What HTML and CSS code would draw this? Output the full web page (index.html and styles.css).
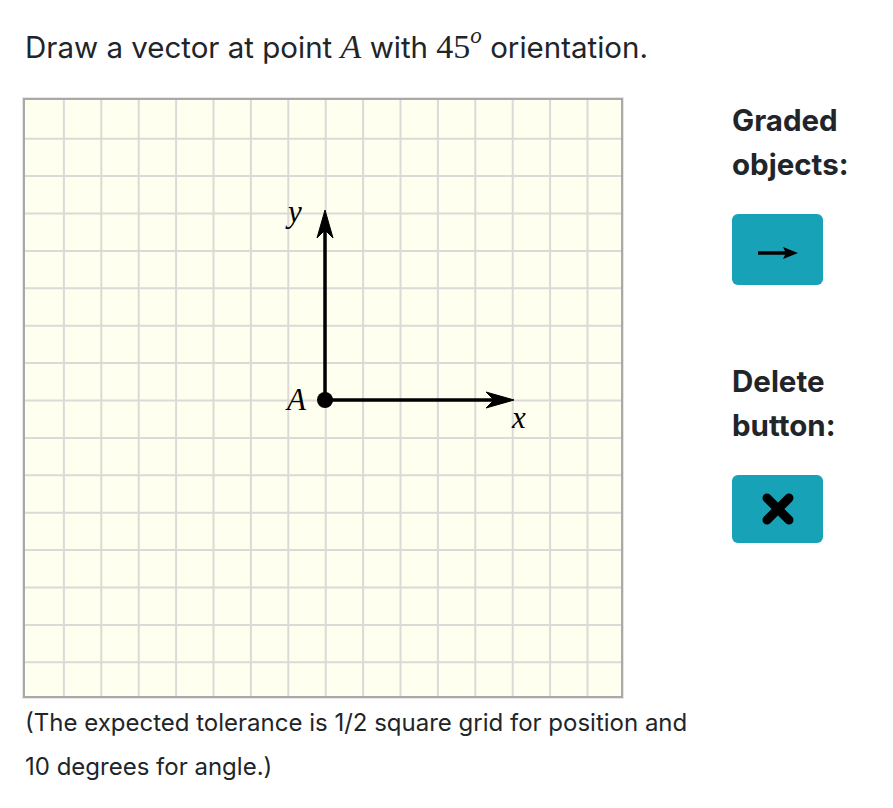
FILE: index.html
```html
<!DOCTYPE html>
<html lang="en">
<head>
<meta charset="utf-8">
<title>Vector question</title>
<link rel="stylesheet" href="styles.css">
</head>
<body>
<main class="page">
  <p class="prompt">Draw a vector at point <span class="math">A</span> with <span class="num">45<sup class="math">o</sup></span> orientation.</p>
  <div class="workspace">
    <div class="board">
      <svg class="board-svg" viewBox="0 0 596 596" width="596" height="596" xmlns="http://www.w3.org/2000/svg">
        <g class="grid" stroke="#dadad6" stroke-width="2">
          <line x1="38.9" y1="0" x2="38.9" y2="596"/>
          <line x1="76.3" y1="0" x2="76.3" y2="596"/>
          <line x1="113.7" y1="0" x2="113.7" y2="596"/>
          <line x1="151.1" y1="0" x2="151.1" y2="596"/>
          <line x1="188.5" y1="0" x2="188.5" y2="596"/>
          <line x1="225.9" y1="0" x2="225.9" y2="596"/>
          <line x1="263.3" y1="0" x2="263.3" y2="596"/>
          <line x1="300.7" y1="0" x2="300.7" y2="596"/>
          <line x1="338.1" y1="0" x2="338.1" y2="596"/>
          <line x1="375.5" y1="0" x2="375.5" y2="596"/>
          <line x1="412.9" y1="0" x2="412.9" y2="596"/>
          <line x1="450.3" y1="0" x2="450.3" y2="596"/>
          <line x1="487.7" y1="0" x2="487.7" y2="596"/>
          <line x1="525.1" y1="0" x2="525.1" y2="596"/>
          <line x1="562.5" y1="0" x2="562.5" y2="596"/>
          <line y1="38.7" x1="0" y2="38.7" x2="596"/>
          <line y1="76.1" x1="0" y2="76.1" x2="596"/>
          <line y1="113.5" x1="0" y2="113.5" x2="596"/>
          <line y1="150.9" x1="0" y2="150.9" x2="596"/>
          <line y1="188.3" x1="0" y2="188.3" x2="596"/>
          <line y1="225.7" x1="0" y2="225.7" x2="596"/>
          <line y1="263.1" x1="0" y2="263.1" x2="596"/>
          <line y1="300.5" x1="0" y2="300.5" x2="596"/>
          <line y1="337.9" x1="0" y2="337.9" x2="596"/>
          <line y1="375.3" x1="0" y2="375.3" x2="596"/>
          <line y1="412.7" x1="0" y2="412.7" x2="596"/>
          <line y1="450.1" x1="0" y2="450.1" x2="596"/>
          <line y1="487.5" x1="0" y2="487.5" x2="596"/>
          <line y1="524.9" x1="0" y2="524.9" x2="596"/>
          <line y1="562.3" x1="0" y2="562.3" x2="596"/>
        </g>
        <g class="axes">
          <line x1="300" y1="300" x2="300" y2="124" stroke="#000" stroke-width="3.5"/>
          <path d="M300 110 L308 138 L300 130 L292 138 Z" fill="#000" stroke="#000" stroke-width="1"/>
          <line x1="300" y1="300" x2="476" y2="300" stroke="#000" stroke-width="3.5"/>
          <path d="M489 300 L461 308 L469 300 L461 292 Z" fill="#000" stroke="#000" stroke-width="1"/>
          <circle cx="300" cy="300" r="8" fill="#000"/>
        </g>
        <text class="lbl" x="263" y="122">y</text>
        <text class="lbl" x="262" y="310">A</text>
        <text class="lbl" x="487" y="328">x</text>
      </svg>
    </div>
    <aside class="tools">
      <h3 class="tool-title">Graded objects:</h3>
      <button class="tool-btn tool-btn-tall" type="button" aria-label="Vector">
        <svg width="40" height="14" viewBox="0 0 40 14" xmlns="http://www.w3.org/2000/svg">
          <line x1="0" y1="7" x2="30" y2="7" stroke="#000" stroke-width="3.5"/>
          <path d="M40 7 L25 1 L28 7 L25 13 Z" fill="#000"/>
        </svg>
      </button>
      <h3 class="tool-title tool-title-gap">Delete button:</h3>
      <button class="tool-btn" type="button" aria-label="Delete">
        <svg width="34" height="34" viewBox="0 0 34 34" xmlns="http://www.w3.org/2000/svg">
          <path d="M6 6 L28 28 M28 6 L6 28" stroke="#000" stroke-width="9" stroke-linecap="round"/>
        </svg>
      </button>
    </aside>
  </div>
  <p class="note">(The expected tolerance is 1/2 square grid for position and 10 degrees for angle.)</p>
</main>
</body>
</html>
```

FILE: styles.css
```css
html, body {
  margin: 0;
  padding: 0;
  background: #fff;
}

.page {
  padding: 27px 0 0 23px;
  font-family: "Inter", "Liberation Sans", sans-serif;
  color: #212529;
}

.prompt {
  margin: 0;
  font-size: 29.5px;
  line-height: 40px;
  padding-left: 2px;
  white-space: nowrap;
}

.math {
  font-family: "Liberation Serif", "DejaVu Serif", serif;
  font-style: italic;
  font-size: 34px;
}

.num {
  font-family: "Liberation Serif", "DejaVu Serif", serif;
  font-size: 34px;
}

.num sup {
  font-size: 23px;
  vertical-align: 0;
  position: relative;
  top: -15px;
}

.workspace {
  display: flex;
  align-items: flex-start;
  margin-top: 27px;
}

.board {
  width: 596px;
  height: 596px;
  border: 2px solid #a9a9a9;
  background: #fffff0;
  box-shadow: 0 0 0 1px #e6e6e6;
}

.board-svg {
  display: block;
}

.lbl {
  font-family: "Liberation Serif", "DejaVu Serif", serif;
  font-style: italic;
  font-size: 31px;
  fill: #000;
}

.tools {
  margin-left: 109px;
  width: 140px;
  display: flex;
  flex-direction: column;
  align-items: flex-start;
}

.tool-title {
  margin: 0;
  font-size: 29.5px;
  font-weight: 700;
  line-height: 44px;
}

.tool-title-gap {
  margin-top: 74px;
}

.tool-btn {
  margin-top: 28px;
  width: 91px;
  height: 68px;
  border: none;
  border-radius: 6px;
  background: #17a2b8;
  display: flex;
  align-items: center;
  justify-content: center;
  padding: 0;
}

.tool-btn-tall {
  height: 71px;
}

.tool-btn-tall svg {
  margin-top: 6px;
}

.note {
  margin: 3px 0 0 0;
  padding-left: 2px;
  width: 680px;
  font-size: 24px;
  line-height: 44px;
}
```
